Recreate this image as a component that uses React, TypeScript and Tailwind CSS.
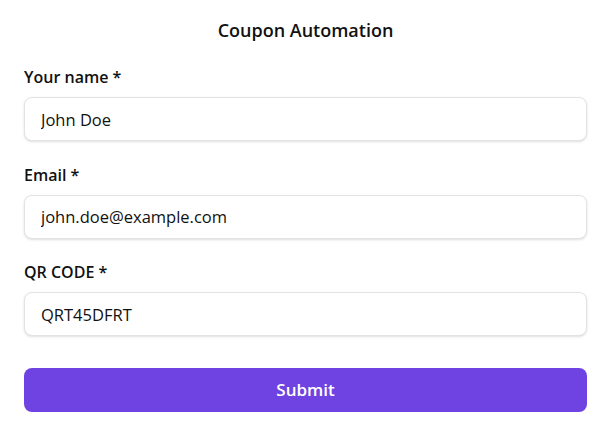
import { useState } from 'react'

const fields = [
  { id: 'name', label: 'Your name *', value: 'John Doe', type: 'text' },
  { id: 'email', label: 'Email *', value: 'john.doe@example.com', type: 'email' },
  { id: 'qr', label: 'QR CODE *', value: 'QRT45DFRT', type: 'text' },
]

export default function App() {
  const [values, setValues] = useState<Record<string, string>>(
    Object.fromEntries(fields.map((f) => [f.id, f.value]))
  )

  return (
    <div className="min-h-screen bg-white px-6 pt-4 font-['Open_Sans',sans-serif] text-[#111]">
      <h1 className="text-center text-[18px] font-semibold leading-7">Coupon Automation</h1>
      <form className="mt-[21px]" onSubmit={(e) => e.preventDefault()}>
        {fields.map((field) => (
          <div key={field.id} className="mb-[21.5px]">
            <label htmlFor={field.id} className="mb-2 block text-[16px] font-semibold leading-6">
              {field.label}
            </label>
            <input
              id={field.id}
              type={field.type}
              value={values[field.id]}
              onChange={(e) => setValues({ ...values, [field.id]: e.target.value })}
              className="h-11 w-full rounded-lg border border-[#e3e3e3] bg-white px-4 text-[16.5px] shadow-sm focus:outline-none"
            />
          </div>
        ))}
        <button
          type="submit"
          className="mt-[10px] h-11 w-full rounded-lg bg-[#6f43e1] text-[17px] font-semibold text-white"
        >
          Submit
        </button>
      </form>
    </div>
  )
}
